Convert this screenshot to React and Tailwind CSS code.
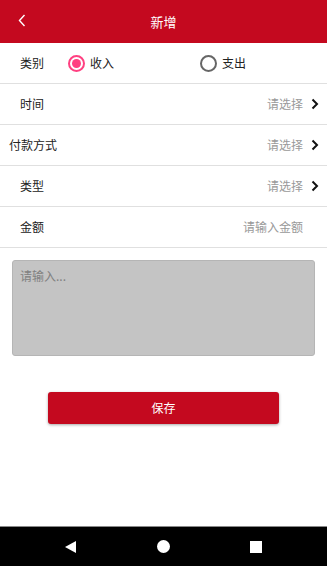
import React, { useState } from 'react';

const font = { fontFamily: '"Noto Sans CJK SC", "Noto Sans", sans-serif' };

const Chevron = () => (
  <svg width="8" height="12" viewBox="0 0 8 12" className="ml-[8px]">
    <path d="M1.5 1.5 L6 6 L1.5 10.5" fill="none" stroke="#111" strokeWidth="2" />
  </svg>
);

const Radio = ({ checked }) => (
  <span
    className={`flex h-[17px] w-[17px] items-center justify-center rounded-full border-2 ${
      checked ? 'border-[#ff4081]' : 'border-[#666]'
    }`}
  >
    {checked && <span className="h-[9px] w-[9px] rounded-full bg-[#ff4081]" />}
  </span>
);

function SelectRow({ label, indent = 'pl-[20px]' }) {
  return (
    <div className={`flex h-[41px] items-center border-b border-[#e0e0e0] pr-[8px] ${indent}`}>
      <span className="text-[12px] text-[#222]">{label}</span>
      <span className="ml-auto text-[12px] text-[#999]">请选择</span>
      <Chevron />
    </div>
  );
}

export default function App() {
  const [kind, setKind] = useState('in');

  return (
    <div className="flex h-[566px] w-[327px] flex-col bg-white" style={font}>
      {/* Header */}
      <div className="relative flex h-[43px] items-center justify-center bg-[#c4091f]">
        <svg width="8" height="13" viewBox="0 0 8 13" className="absolute left-[18px] top-[14px]">
          <path d="M6.5 1 L1.5 6.5 L6.5 12" fill="none" stroke="#fff" strokeWidth="1.4" />
        </svg>
        <span className="text-[13px] text-white">新增</span>
      </div>

      {/* Category */}
      <div className="flex h-[41px] items-center border-b border-[#e0e0e0] pl-[20px]">
        <span className="w-[48px] text-[12px] text-[#222]">类别</span>
        <button onClick={() => setKind('in')} className="flex w-[132px] items-center">
          <Radio checked={kind === 'in'} />
          <span className="ml-[5px] text-[12px] text-[#222]">收入</span>
        </button>
        <button onClick={() => setKind('out')} className="flex items-center">
          <Radio checked={kind === 'out'} />
          <span className="ml-[5px] text-[12px] text-[#222]">支出</span>
        </button>
      </div>

      <SelectRow label="时间" />
      <SelectRow label="付款方式" indent="pl-[9px]" />
      <SelectRow label="类型" />

      <div className="flex h-[41px] items-center border-b border-[#e0e0e0] pl-[20px] pr-[24px]">
        <span className="text-[12px] text-[#222]">金额</span>
        <input
          className="ml-auto w-[120px] bg-transparent text-right text-[12px] text-[#222] outline-none placeholder:text-[#999]"
          placeholder="请输入金额"
        />
      </div>

      {/* Remark */}
      <div className="px-[12px] pt-[12px]">
        <textarea
          className="block h-[96px] w-full resize-none rounded-[3px] border border-[#b5b5b5] bg-[#c4c4c4] px-[7px] py-[6px] text-[12px] text-[#333] outline-none placeholder:text-[#808080]"
          placeholder="请输入..."
        />
      </div>

      <div className="flex justify-center pt-[36px]">
        <button className="h-[32px] w-[231px] rounded-[3px] bg-[#c4091f] text-[12px] text-white shadow-[0_1px_3px_rgba(0,0,0,0.35)]">
          保存
        </button>
      </div>

      {/* Nav bar */}
      <div className="mt-auto flex h-[40px] items-center justify-between border-t border-[#888] bg-black px-[65px]">
        <svg width="12" height="12" viewBox="0 0 12 12">
          <path d="M0 6 L11 0 L11 12 Z" fill="#fff" />
        </svg>
        <span className="h-[13px] w-[13px] rounded-full bg-white" />
        <span className="h-[12px] w-[12px] bg-white" />
      </div>
    </div>
  );
}
